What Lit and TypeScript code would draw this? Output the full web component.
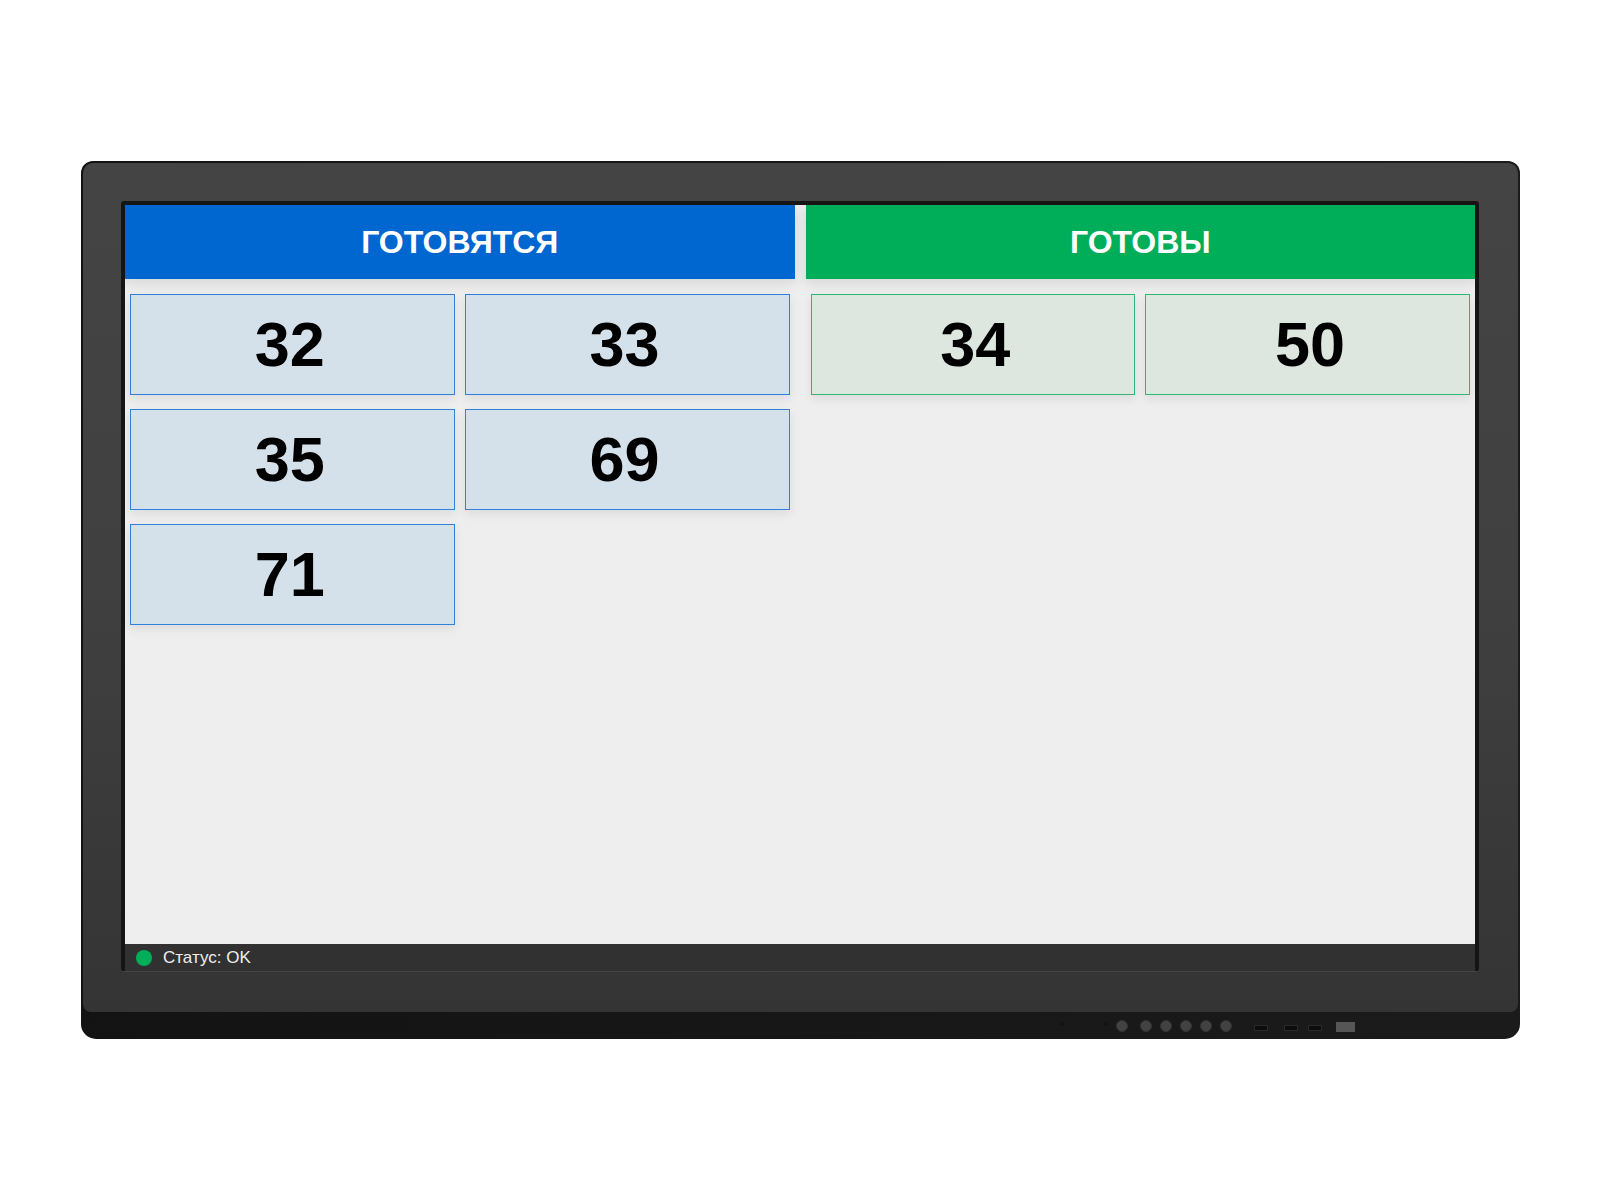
import { LitElement, html, svg, css } from "lit";
import { customElement, property } from "lit/decorators.js";

@customElement("order-column")
export class OrderColumn extends LitElement {
  @property() heading = "";
  @property() kind: "cooking" | "ready" = "cooking";
  @property({ attribute: false }) orders: number[] = [];

  static styles = css`
    :host {
      display: block;
      min-width: 0;
    }
    .heading {
      margin: 0;
      padding: 19px 0;
      text-align: center;
      font-size: 32px;
      line-height: 36px;
      font-weight: 700;
      color: #fff;
      box-shadow: 0 4px 12px rgba(0, 0, 0, 0.1);
    }
    .cooking .heading {
      background: #0066d0;
    }
    .ready .heading {
      background: #00ae5a;
    }
    .orders {
      display: grid;
      grid-template-columns: 1fr 1fr;
      gap: 14px 10px;
      margin: 0;
      padding: 15px 5px;
      list-style: none;
    }
    .order {
      box-sizing: border-box;
      border: 1px solid;
      padding: 14px 0;
      text-align: center;
      font-size: 63px;
      line-height: 71px;
      font-weight: 700;
      color: #000;
      box-shadow: 0 4px 10px rgba(0, 0, 0, 0.08);
    }
    .cooking .order {
      padding-right: 5px;
      background: #d5e1ea;
      border-color: #3080dc;
    }
    .ready .order {
      padding-left: 5px;
      background: #dde7e0;
      border-color: #2cb874;
    }
  `;

  render() {
    return html`
      <section class=${this.kind}>
        <h2 class="heading">${this.heading}</h2>
        <ul class="orders">
          ${this.orders.map((n) => html`<li class="order">${n}</li>`)}
        </ul>
      </section>
    `;
  }
}

@customElement("app-root")
export class AppRoot extends LitElement {
  static styles = css`
    :host {
      display: flex;
      align-items: center;
      box-sizing: border-box;
      min-height: 100vh;
      padding: 40px 80px 40px 81px;
      background: #fff;
      font-family: "Liberation Sans", Arial, sans-serif;
    }
    .monitor {
      flex: 1;
      box-sizing: border-box;
      min-width: 0;
      padding: 2px 2px 0;
      border-radius: 12px 12px 15px 15px;
      background: linear-gradient(90deg, #131313, #1b1b1b);
    }
    .bezel {
      padding: 38px 39px 40px 38px;
      border-radius: 10px 10px 8px 8px;
      background: linear-gradient(#444 0%, #404040 50%, #343434 100%);
    }
    .rim {
      padding: 4px 4px 0;
      border-bottom: 1px solid #454545;
      border-radius: 3px;
      background: #151515;
    }
    .screen {
      display: flex;
      flex-direction: column;
      aspect-ratio: 1350 / 766;
      background: #eee;
    }
    .board {
      flex: 1;
      display: grid;
      grid-template-columns: 1fr 1fr;
      gap: 11px;
      overflow: hidden;
    }
    .status {
      display: flex;
      align-items: center;
      gap: 11px;
      padding: 4px 11px 3px;
      background: #313131;
      color: #eee;
      font-size: 17px;
      line-height: 20px;
    }
    .dot {
      width: 16px;
      height: 16px;
      border-radius: 50%;
      background: #00ae5a;
    }
    .chin {
      display: flex;
      justify-content: flex-end;
      padding-right: 158px;
    }
    .controls {
      display: block;
      width: 310px;
      height: 27px;
    }
  `;

  render() {
    return html`
      <main class="monitor">
        <div class="bezel">
          <div class="rim">
            <div class="screen">
              <div class="board">
                <order-column heading="ГОТОВЯТСЯ" kind="cooking" .orders=${[32, 33, 35, 69, 71]}></order-column>
                <order-column heading="ГОТОВЫ" kind="ready" .orders=${[34, 50]}></order-column>
              </div>
              <div class="status" role="status">
                <span class="dot"></span>
                <span>Статус: OK</span>
              </div>
            </div>
          </div>
        </div>
        <div class="chin">
          <svg class="controls" viewBox="0 0 310 27" aria-hidden="true">
            <g fill="#101010">
              <circle cx="12" cy="12" r="1.5" />
              <circle cx="56" cy="12" r="1.5" />
            </g>
            <g fill="#424242" stroke="#333">
              ${[72, 96, 116, 136, 156, 176].map((x) => this.knob(x))}
            </g>
            <g fill="#0c0c0c" stroke="#2a2a2a">
              ${[204, 234, 258].map((x) => this.port(x))}
            </g>
            <rect x="286" y="10" width="19" height="10" fill="#565656" />
          </svg>
        </div>
      </main>
    `;
  }

  private knob(x: number) {
    return svg`<circle cx=${x} cy="14" r="5.5" />`;
  }

  private port(x: number) {
    return svg`<rect x=${x + 0.5} y="13.5" width="13" height="5" />`;
  }
}
